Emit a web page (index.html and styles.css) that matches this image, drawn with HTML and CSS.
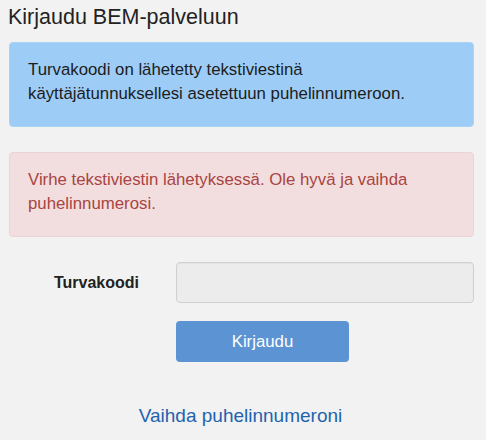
FILE: index.html
```html
<!DOCTYPE html>
<html lang="fi">
<head>
<meta charset="utf-8">
<link rel="stylesheet" href="styles.css">
</head>
<body>
<div class="page">
  <h1 class="title">Kirjaudu BEM-palveluun</h1>
  <div class="alert alert-info">Turvakoodi on lähetetty tekstiviestinä käyttäjätunnuksellesi asetettuun puhelinnumeroon.</div>
  <div class="alert alert-error">Virhe tekstiviestin lähetyksessä. Ole hyvä ja vaihda puhelinnumerosi.</div>
  <form class="form">
    <div class="row">
      <label class="label" for="code">Turvakoodi</label>
      <input class="input" id="code" type="text" disabled>
    </div>
    <div class="row">
      <span class="label"></span>
      <button class="btn" type="button">Kirjaudu</button>
    </div>
  </form>
  <div class="link-row"><a class="link" href="#">Vaihda puhelinnumeroni</a></div>
</div>
</body>
</html>
```
FILE: styles.css
```css
html, body {
  margin: 0;
  padding: 0;
  background: #f2f2f2;
}
body {
  font-family: "Liberation Sans", Arial, sans-serif;
  color: #222;
}
.page {
  width: 465px;
  padding: 0 0 0 9px;
}
.title {
  font-size: 21.5px;
  font-weight: normal;
  line-height: 26px;
  margin: 4px 0 12px -1px;
  color: #222;
}
.alert {
  box-sizing: border-box;
  height: 85px;
  padding: 15px 18px;
  border: 1px solid;
  border-radius: 4px;
  font-size: 16.8px;
  line-height: 24px;
  margin-bottom: 25px;
}
.alert-info {
  background: #9dcdf7;
  border-color: #a8d3f6;
  color: #1c1c1c;
}
.alert-error {
  background: #f2dede;
  border-color: #ebd3d6;
  color: #a94442;
}
.form {
  margin: 0;
}
.row {
  display: flex;
  align-items: center;
  gap: 37px;
  margin-bottom: 18px;
}
.label {
  width: 130px;
  flex: none;
  text-align: right;
  font-weight: bold;
  font-size: 16px;
  color: #222;
}
.input {
  flex: 1;
  box-sizing: border-box;
  height: 41px;
  border: 1px solid #d0d0d0;
  border-radius: 4px;
  background: #ececec;
  margin: 0;
  box-shadow: inset 0 1px 1px rgba(0,0,0,0.04);
}
.btn {
  width: 173px;
  height: 41px;
  border: none;
  border-radius: 4px;
  background: #5b93d3;
  color: #fff;
  font-family: "Liberation Sans", Arial, sans-serif;
  font-size: 16.8px;
  margin: 0;
}
.link-row {
  text-align: center;
  margin-top: 43px;
  padding-right: 2px;
}
.link {
  font-size: 19px;
  color: #1f63ad;
  text-decoration: none;
}
```
